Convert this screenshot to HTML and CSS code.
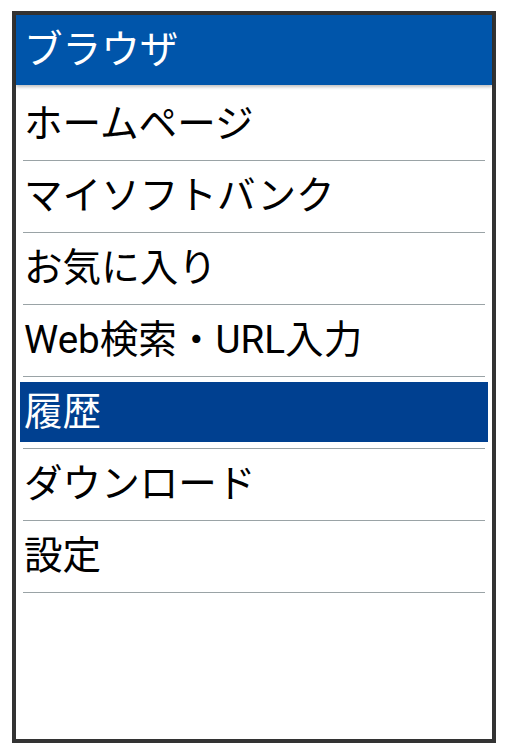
FILE: index.html
```html
<html>
<head>
  <meta charset="utf-8">
  <link rel="stylesheet" href="styles.css">
</head>
<body>
<div id="screen">
  <div id="title">ブラウザ</div>
  <ul id="menu">
    <li class="item"><div class="label">ホームページ</div></li>
    <li class="item"><div class="label">マイソフトバンク</div></li>
    <li class="item"><div class="label">お気に入り</div></li>
    <li class="item"><div class="label">Web検索・URL入力</div></li>
    <li class="item selected"><div class="label">履歴</div></li>
    <li class="item"><div class="label">ダウンロード</div></li>
    <li class="item"><div class="label">設定</div></li>
  </ul>
</div>
</body>
</html>
```

FILE: styles.css
```css
body{
  margin: 0;
  background-color: #fff;
  font-family: Roboto, "Noto Sans CJK JP", sans-serif;
  font-size: 38.6px;
  color: #000;
}
#screen{
  margin: 11px 0 0 12px;
  width: 484px;
  height: 732px;
  border: 4px solid #333;
  box-sizing: border-box;
  background-color: #fff;
}
#title{
  height: 70px;
  line-height: 70px;
  padding-left: 8px;
  background-color: #0055aa;
  color: #fff;
  font-size: 38.6px;
  box-shadow: 0 2px 3px rgba(0, 0, 0, 0.25);
  position: relative;
}
#menu{
  list-style: none;
  margin: 0;
  padding: 4px 0 0 0;
}
.item{
  padding: 5px 4px 0 4px;
}
.item::after{
  content: "";
  display: block;
  height: 1px;
  margin: 6px 3px 0 3px;
  background-color: #9aa3a6;
}
.item .label{
  height: 60px;
  line-height: 60px;
  padding-left: 4px;
  white-space: nowrap;
}
.selected .label{
  background-color: #004090;
  color: #fff;
}
```
